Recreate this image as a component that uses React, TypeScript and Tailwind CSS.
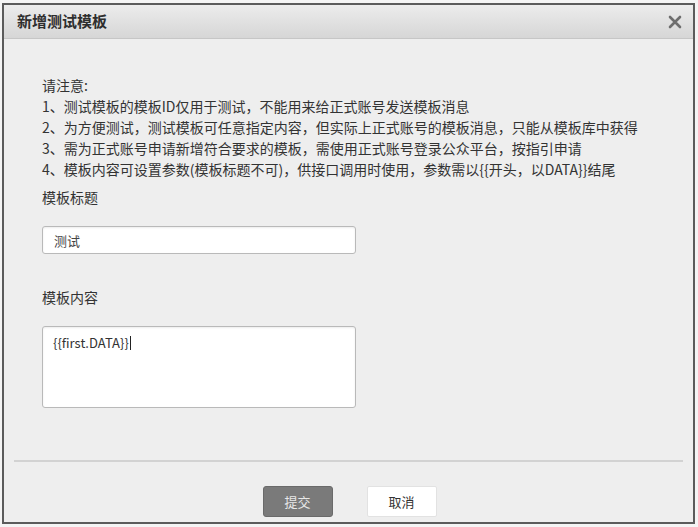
export default function App() {
  const notes = [
    "1、测试模板的模板ID仅用于测试，不能用来给正式账号发送模板消息",
    "2、为方便测试，测试模板可任意指定内容，但实际上正式账号的模板消息，只能从模板库中获得",
    "3、需为正式账号申请新增符合要求的模板，需使用正式账号登录公众平台，按指引申请",
    "4、模板内容可设置参数(模板标题不可)，供接口调用时使用，参数需以{{开头，以DATA}}结尾",
  ];

  return (
    <div
      className="h-[527px] w-[698px] bg-[#f4f4f4] pl-[2px] pt-[3px]"
      style={{ fontFamily: '"Noto Sans CJK SC", "Noto Sans", sans-serif' }}
    >
      <div className="flex h-[521px] w-[693px] flex-col border-2 border-[#5b5b5b] bg-[#eeeeee]">
        {/* Header */}
        <div className="flex h-[34px] items-center justify-between border-b border-[#c6c6c6] bg-gradient-to-b from-[#ececec] to-[#d6d6d6] pl-[13px] pr-[11px]">
          <h1 className="text-[15px] font-bold text-[#2e2e2e]">新增测试模板</h1>
          <svg width="14" height="14" viewBox="0 0 14 14" className="mt-[1px]">
            <path d="M2 2 L12 12 M12 2 L2 12" stroke="#6e6e6e" strokeWidth="2.6" strokeLinecap="round" />
          </svg>
        </div>

        {/* Body */}
        <div className="px-[38px] pt-[36px] text-[14px] leading-[21px] text-[#333]">
          <p>请注意:</p>
          {notes.map((n) => (
            <p key={n}>{n}</p>
          ))}

          <p className="mt-[7px]">模板标题</p>
          <div className="mt-[18px] flex h-[28px] w-[314px] items-center rounded-[3px] border border-[#b9b9b9] bg-white px-[11px] shadow-[inset_0_1px_2px_rgba(0,0,0,0.08)]">
            <span className="text-[13px] text-[#444]">测试</span>
          </div>

          <p className="mt-[33px]">模板内容</p>
          <div className="mt-[18px] h-[82px] w-[314px] rounded-[3px] border border-[#b9b9b9] bg-white px-[10px] pt-[5px] shadow-[inset_0_1px_2px_rgba(0,0,0,0.08)]">
            <span className="text-[13px] text-[#333]">{"{{first.DATA}}"}</span>
            <span className="ml-[1px] inline-block h-[14px] w-[1px] translate-y-[2px] bg-[#222]" />
          </div>
        </div>

        {/* Footer */}
        <div className="mx-[10px] mt-[52px] border-t-2 border-[#d2d2d2]" />
        <div className="mt-[24px] flex justify-center gap-[34px] pl-[2px]">
          <button className="h-[31px] w-[70px] rounded-[3px] border border-[#6a6a6a] bg-[#7a7a7a] text-[13px] text-[#e8e8e8]">
            提交
          </button>
          <button className="h-[31px] w-[70px] rounded-[2px] border border-[#e2e2e2] bg-white text-[13px] text-[#333]">
            取消
          </button>
        </div>
      </div>
    </div>
  );
}
